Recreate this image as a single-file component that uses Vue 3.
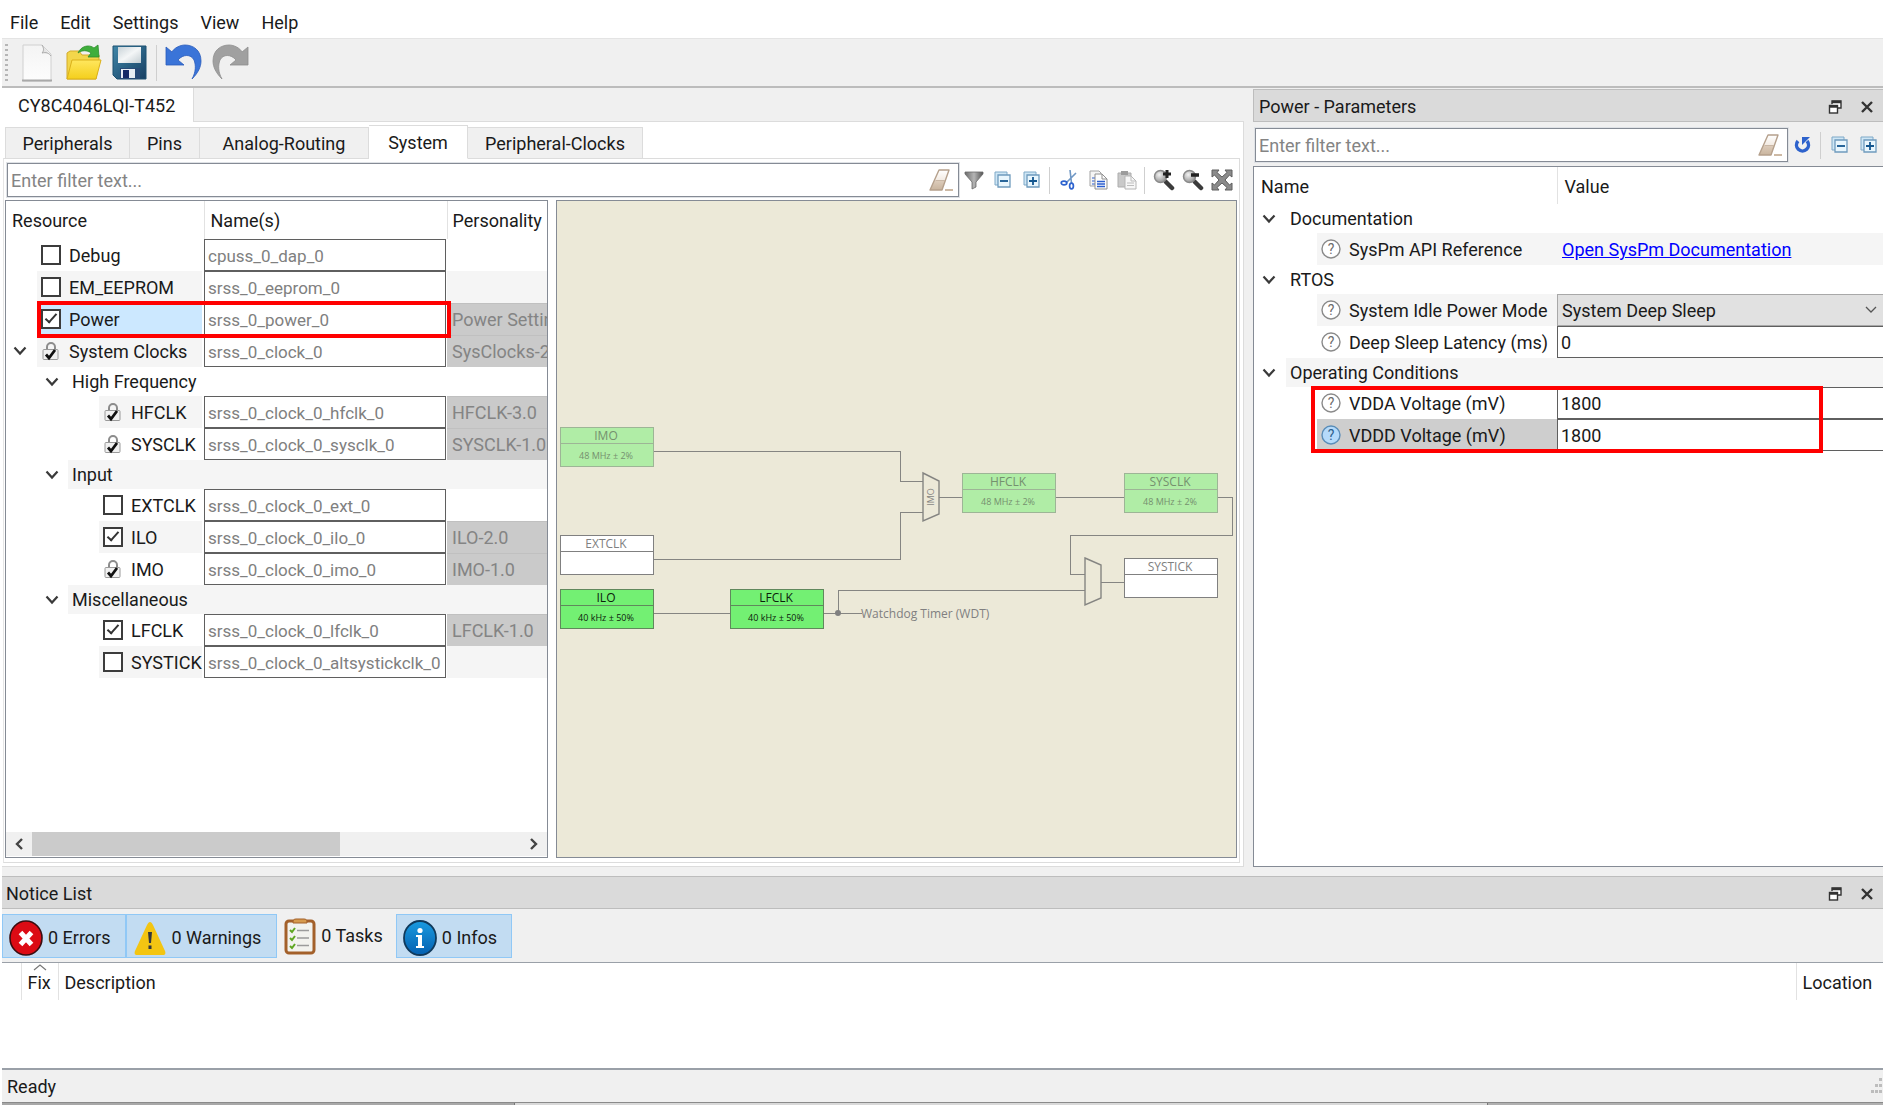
<script setup>
import { ref } from 'vue'

const menus = ['File', 'Edit', 'Settings', 'View', 'Help']

const tabs = [
  { label: 'Peripherals', width: 125 },
  { label: 'Pins', width: 70 },
  { label: 'Analog-Routing', width: 169 },
  { label: 'System', width: 99 },
  { label: 'Peripheral-Clocks', width: 175 }
]
const activeTab = ref('System')

const resources = ref([
  { id: 'debug', label: 'Debug', level: 1, kind: 'check', on: false, name: 'cpuss_0_dap_0' },
  { id: 'eeprom', label: 'EM_EEPROM', level: 1, kind: 'check', on: false, name: 'srss_0_eeprom_0' },
  { id: 'power', label: 'Power', level: 1, kind: 'check', on: true, name: 'srss_0_power_0', personality: 'Power Settings-1.0', selected: true },
  { id: 'clocks', label: 'System Clocks', level: 1, kind: 'lock', open: true, name: 'srss_0_clock_0', personality: 'SysClocks-2.0' },
  { id: 'hf', label: 'High Frequency', kind: 'section' },
  { id: 'hfclk', label: 'HFCLK', level: 2, kind: 'lock', name: 'srss_0_clock_0_hfclk_0', personality: 'HFCLK-3.0' },
  { id: 'sysclk', label: 'SYSCLK', level: 2, kind: 'lock', name: 'srss_0_clock_0_sysclk_0', personality: 'SYSCLK-1.0' },
  { id: 'input', label: 'Input', kind: 'section' },
  { id: 'extclk', label: 'EXTCLK', level: 2, kind: 'check', on: false, name: 'srss_0_clock_0_ext_0' },
  { id: 'ilo', label: 'ILO', level: 2, kind: 'check', on: true, name: 'srss_0_clock_0_ilo_0', personality: 'ILO-2.0' },
  { id: 'imo', label: 'IMO', level: 2, kind: 'lock', name: 'srss_0_clock_0_imo_0', personality: 'IMO-1.0' },
  { id: 'misc', label: 'Miscellaneous', kind: 'section' },
  { id: 'lfclk', label: 'LFCLK', level: 2, kind: 'check', on: true, name: 'srss_0_clock_0_lfclk_0', personality: 'LFCLK-1.0' },
  { id: 'systick', label: 'SYSTICK', level: 2, kind: 'check', on: false, name: 'srss_0_clock_0_altsystickclk_0' }
])

const nodes = [
  { name: 'IMO', rate: '48 MHz ± 2%', x: 3, y: 225, state: 'fixed' },
  { name: 'EXTCLK', rate: '', x: 3, y: 333, state: 'off' },
  { name: 'ILO', rate: '40 kHz ± 50%', x: 3, y: 387, state: 'on' },
  { name: 'LFCLK', rate: '40 kHz ± 50%', x: 173, y: 387, state: 'on' },
  { name: 'HFCLK', rate: '48 MHz ± 2%', x: 405, y: 271, state: 'fixed' },
  { name: 'SYSCLK', rate: '48 MHz ± 2%', x: 567, y: 271, state: 'fixed' },
  { name: 'SYSTICK', rate: '', x: 567, y: 356, state: 'off' }
]

const wires = [
  'M96 249H343V279H366',
  'M96 357H343V310H366',
  'M382 295H405',
  'M498 295H567',
  'M660 295H675V333H513V372H528',
  'M96 411H173',
  'M266 411H305',
  'M281 411V388H528',
  'M544 380H567'
]

const params = ref([
  { id: 'doc', label: 'Documentation', kind: 'section' },
  { id: 'api', label: 'SysPm API Reference', kind: 'link', value: 'Open SysPm Documentation', shade: true },
  { id: 'rtos', label: 'RTOS', kind: 'section' },
  { id: 'idle', label: 'System Idle Power Mode', kind: 'select', value: 'System Deep Sleep', shade: true },
  { id: 'lat', label: 'Deep Sleep Latency (ms)', kind: 'text', value: '0' },
  { id: 'op', label: 'Operating Conditions', kind: 'section', shade: true },
  { id: 'vdda', label: 'VDDA Voltage (mV)', kind: 'text', value: '1800' },
  { id: 'vddd', label: 'VDDD Voltage (mV)', kind: 'text', value: '1800', current: true }
])

const shaded = (i) => i % 2 === 1
</script>

<template>
  <div class="app">
    <svg class="defs" width="0" height="0" aria-hidden="true">
      <defs>
        <linearGradient id="gPage" x1="0" y1="0" x2="0" y2="1"><stop offset="0" stop-color="#f4f4f4" /><stop offset="1" stop-color="#fdfdfd" /></linearGradient>
        <linearGradient id="gFolder" x1="0" y1="0" x2="0" y2="1"><stop offset="0" stop-color="#ffe75e" /><stop offset="1" stop-color="#f4cf1c" /></linearGradient>
        <linearGradient id="gDisk" x1="0" y1="0" x2="1" y2="1"><stop offset="0" stop-color="#3f86a8" /><stop offset="1" stop-color="#173f63" /></linearGradient>
        <linearGradient id="gLabel" x1="0" y1="0" x2="1" y2="1"><stop offset="0" stop-color="#c9d3d8" /><stop offset="0.5" stop-color="#f4f6f7" /><stop offset="1" stop-color="#c3cdd2" /></linearGradient>
        <linearGradient id="gErase" x1="0" y1="0" x2="0" y2="1"><stop offset="0" stop-color="#ffffff" /><stop offset="0.5" stop-color="#f3ebe3" /><stop offset="0.55" stop-color="#dccbba" /><stop offset="1" stop-color="#c9b49d" /></linearGradient>
        <linearGradient id="gFunnel" x1="0" y1="0" x2="1" y2="0"><stop offset="0" stop-color="#6b6b6b" /><stop offset="0.5" stop-color="#b5b5b5" /><stop offset="1" stop-color="#555" /></linearGradient>
        <linearGradient id="gInfo" x1="0" y1="0" x2="0" y2="1"><stop offset="0" stop-color="#1a9be0" /><stop offset="1" stop-color="#0560b0" /></linearGradient>
        <radialGradient id="gLens" cx="0.4" cy="0.35" r="0.7"><stop offset="0" stop-color="#f2f2f2" /><stop offset="1" stop-color="#8f8f8f" /></radialGradient>
      </defs>
      <symbol id="chev" viewBox="0 0 14 10"><path d="M1.500 1.500l5.500 6 5.500-6" fill="none" stroke="#3a3a3a" stroke-width="2.200" /></symbol>
      <symbol id="eraser" viewBox="0 0 24 24">
        <path d="M10 2h10l-7 20H1z" fill="url(#gErase)" stroke="#b5a08c" stroke-width="1.4" stroke-linejoin="round" />
        <path d="M6.500 12.500h9.500" stroke="#c9b7a5" stroke-width="1" /><path d="M16 22h8" stroke="#cdb9a4" stroke-width="2" />
      </symbol>
      <symbol id="collapse" viewBox="0 0 18 18">
        <path d="M1 1h12v13H1z" fill="#cfe6f5" stroke="#7fa9c8" /><path d="M4 4h12v12H4z" fill="#e9f6fd" stroke="#6f9bbd" stroke-width="1.3" /><path d="M6 10h8" stroke="#13568f" stroke-width="1.800" />
      </symbol>
      <symbol id="expand" viewBox="0 0 18 18">
        <path d="M1 1h12v13H1z" fill="#cfe6f5" stroke="#7fa9c8" /><path d="M4 4h12v12H4z" fill="#e9f6fd" stroke="#6f9bbd" stroke-width="1.3" /><path d="M6 10h8M10 6v8" stroke="#13568f" stroke-width="1.800" />
      </symbol>
      <symbol id="lock" viewBox="0 0 18 20">
        <path d="M5 9V6a4 4 0 0 1 8 0v3" fill="none" stroke="#8c8c8c" stroke-width="2" />
        <rect x="1" y="8.500" width="15" height="10" rx="1" fill="#f1f1f1" stroke="#9a9a9a" />
        <path d="M4 13.500l3 3.500 6-8" fill="none" stroke="#111" stroke-width="2.800" />
      </symbol>
      <symbol id="float" viewBox="0 0 14 14">
        <path d="M4 4V1h9v7h-3" fill="#fff" stroke="#333" stroke-width="1.400" /><path d="M4 2h9" stroke="#333" stroke-width="2.500" />
        <rect x="1.500" y="5.500" width="8" height="7.500" fill="#fff" stroke="#333" stroke-width="1.400" /><path d="M1 6.500h9" stroke="#333" stroke-width="2.500" />
      </symbol>
      <symbol id="close" viewBox="0 0 14 14"><path d="M2 2l10 10M12 2L2 12" stroke="#333" stroke-width="2.400" /></symbol>
    </svg>

    <nav class="menubar">
      <button v-for="m in menus" :key="m" type="button">{{ m }}</button>
    </nav>

    <div class="toolbar">
      <span class="grip"></span>
      <button type="button" aria-label="New">
        <svg width="38" height="38" viewBox="0 0 38 38"><path d="M4 1h19l9 9v27H4z" fill="url(#gPage)" stroke="#d0d0d0" /><path d="M3 36.500h30" stroke="#a9a9a9" stroke-width="2" /><path d="M23 1c2 3 2 6 0 8 4-1 7 0 9 3" fill="#e4e4e4" stroke="#a8a8a8" /></svg>
      </button>
      <button type="button" aria-label="Open">
        <svg width="38" height="38" viewBox="0 0 38 38"><path d="M2 35V9l3-2h9l3 4h17v5L31 35z" fill="#f2d64b" stroke="#d3aa2a" /><path d="M2 35l5-19h29l-5 19z" fill="url(#gFolder)" stroke="#dbb11a" /><path d="M13 9C16 2 24 0 29 4l4-3 1 12H23l3-4c-4-3-9-3-13 0z" fill="#3fae3c" stroke="#2c8e2c" stroke-width="0.800" /></svg>
      </button>
      <button type="button" aria-label="Save">
        <svg width="38" height="38" viewBox="0 0 38 38"><path d="M2 2h33v33H6l-4-4z" fill="url(#gDisk)" stroke="#1c5170" /><path d="M7 3h23v16H7z" fill="url(#gLabel)" /><path d="M9 24h20v11H9z" fill="#274a77" /><path d="M10 25h14v9H10z" fill="#e9eef5" /><path d="M12 26h6v8h-6z" fill="#152a66" /></svg>
      </button>
      <span class="bar-sep"></span>
      <button type="button" aria-label="Undo">
        <svg width="38" height="38" viewBox="0 0 38 38"><path d="M1 3v18h18l-6-5c5-6 13-6 16 0 2 5 2 12-2 19 6-6 9-12 9-18C36 6 28 1 20 1 15 1 9 4 7 8z" fill="#3a74d8" stroke="#2a5cbb" stroke-width="0.800" /></svg>
      </button>
      <button type="button" aria-label="Redo">
        <svg width="38" height="38" viewBox="0 0 38 38"><path d="M37 3v18H19l6-5c-5-6-13-6-16 0-2 5-2 12 2 19-6-6-9-12-9-18C2 6 10 1 18 1c5 0 11 3 13 7z" fill="#a0a0a0" stroke="#8e8e8e" stroke-width="0.800" /></svg>
      </button>
    </div>

    <div class="work">
      <section class="doc">
        <div class="doctabs"><button type="button" class="doctab">CY8C4046LQI-T452</button><span class="doctabs-rest"></span></div>
        <div class="docbody">
          <div class="tabs" role="tablist">
            <button v-for="t in tabs" :key="t.label" type="button" role="tab" :aria-selected="t.label === activeTab" :class="['tab', { active: t.label === activeTab }]" :style="{ width: t.width + 'px' }" @click="activeTab = t.label">{{ t.label }}</button>
          </div>
          <div class="pane">
            <div class="filterrow">
              <div class="filter">
                <input type="text" placeholder="Enter filter text..." aria-label="Filter resources" />
                <button type="button" aria-label="Clear filter"><svg width="24" height="24"><use href="#eraser" /></svg></button>
              </div>
              <div class="tools">
                <button type="button" aria-label="Filter"><svg width="20" height="20" viewBox="0 0 20 20"><path d="M1 2h18v2l-7 8v5l-4 2v-7L1 4z" fill="url(#gFunnel)" stroke="#6a6a6a" stroke-width="0.800" /></svg></button>
                <button type="button" aria-label="Collapse all"><svg width="18" height="18"><use href="#collapse" /></svg></button>
                <button type="button" aria-label="Expand all"><svg width="18" height="18"><use href="#expand" /></svg></button>
                <span class="bar-sep"></span>
                <button type="button" aria-label="Cut"><svg width="20" height="20" viewBox="0 0 20 20"><path d="M11 0l1.500 13M17 3L7 13" stroke="#6f97c4" stroke-width="1.600" fill="none" /><ellipse cx="5" cy="13" rx="2.800" ry="1.800" fill="none" stroke="#2c62cf" stroke-width="1.700" /><ellipse cx="12.500" cy="16" rx="1.900" ry="2.800" fill="none" stroke="#2c62cf" stroke-width="1.700" /></svg></button>
                <button type="button" aria-label="Copy"><svg width="20" height="20" viewBox="0 0 20 20"><path d="M2 1h9l2 2v13H2z" fill="#f5f5f5" stroke="#a3a3a3" /><path d="M4 8h3M4 11h3M4 14h3" stroke="#2c5fd0" /><path d="M7 4h7l5 5v10H7z" fill="#fdfdfd" stroke="#909090" /><path d="M14 4v5h5" fill="none" stroke="#909090" /><path d="M9 11.500h8M9 14h8M9 16.500h8" stroke="#2c5fd0" stroke-width="1.400" /></svg></button>
                <button type="button" aria-label="Paste"><svg width="20" height="20" viewBox="0 0 20 20"><path d="M1 3h13v14H1z" fill="#c9c9c9" stroke="#adadad" /><path d="M4 1h7v4H4z" fill="#9c9c9c" /><path d="M8 6h6l5 5v8H8z" fill="#f7f7f7" stroke="#b5b5b5" /><path d="M14 6v5h5M10 13h7M10 15.500h7" fill="none" stroke="#bdbdbd" /></svg></button>
                <span class="bar-sep"></span>
                <button type="button" aria-label="Zoom in"><svg width="22" height="22" viewBox="0 0 22 22"><path d="M13 13l6 6" stroke="#3b3b3b" stroke-width="4.500" stroke-linecap="round" /><circle cx="7.500" cy="7.500" r="6" fill="url(#gLens)" stroke="#8a8a8a" stroke-width="1.500" /><path d="M14 1v8M10 5h8" stroke="#222" stroke-width="3" /></svg></button>
                <button type="button" aria-label="Zoom out"><svg width="22" height="22" viewBox="0 0 22 22"><path d="M13 13l6 6" stroke="#3b3b3b" stroke-width="4.500" stroke-linecap="round" /><circle cx="7.500" cy="7.500" r="6" fill="url(#gLens)" stroke="#8a8a8a" stroke-width="1.500" /><path d="M9 6h8" stroke="#222" stroke-width="3.500" /></svg></button>
                <button type="button" aria-label="Fit to view"><svg width="22" height="22" viewBox="0 0 22 22"><path d="M1 1h7L6 3.500l5 4.500 5-4.500L14 1h7v7l-2.500-2L14 11l4.500 5 2.500-2v7h-7l2-2.500-5-4.500-5 4.500L8 21H1v-7l2.500 2L8 11 3.500 6 1 8z" fill="#8b8b8b" stroke="#5e5e5e" /></svg></button>
              </div>
            </div>

            <div class="split">
              <div class="tree">
                <div class="treeview">
                  <table>
                    <colgroup><col class="c-res" /><col class="c-name" /><col class="c-pers" /></colgroup>
                    <thead><tr><th>Resource</th><th>Name(s)</th><th>Personality</th></tr></thead>
                    <tbody>
                      <template v-for="(r, i) in resources" :key="r.id">
                        <tr v-if="r.kind === 'section'" class="section">
                          <td colspan="3">
                            <div class="cell">
                              <button type="button" class="twist lvl-section" :aria-label="'Toggle ' + r.label"><svg width="14" height="10"><use href="#chev" /></svg></button>
                              <span :class="['sectitle', { shade: shaded(i) }]">{{ r.label }}</span>
                            </div>
                          </td>
                        </tr>
                        <tr v-else>
                          <td>
                            <div class="cell">
                              <span :class="['indent', 'lvl' + r.level]"><button v-if="r.open" type="button" class="twist" :aria-label="'Toggle ' + r.label"><svg width="14" height="10"><use href="#chev" /></svg></button></span>
                              <label :class="['res', { shade: shaded(i), selected: r.selected }]">
                                <input v-if="r.kind === 'check'" v-model="r.on" type="checkbox" />
                                <svg v-else class="lock" width="18" height="20"><use href="#lock" /></svg>
                                <span>{{ r.label }}</span>
                              </label>
                            </div>
                            <span v-if="r.selected" class="mark mark-power"></span>
                          </td>
                          <td><input class="field" type="text" :value="r.name" :aria-label="r.label + ' name'" readonly /></td>
                          <td><div :class="['pers', { filled: r.personality, shade: shaded(i) }]">{{ r.personality }}</div></td>
                        </tr>
                      </template>
                    </tbody>
                  </table>
                </div>
                <div class="hscroll">
                  <button type="button" aria-label="Scroll left"><svg width="10" height="14" viewBox="0 0 10 14"><path d="M8 2L3 7l5 5" fill="none" stroke="#444" stroke-width="2.400" /></svg></button>
                  <div class="track"><div class="thumb"></div></div>
                  <button type="button" aria-label="Scroll right"><svg width="10" height="14" viewBox="0 0 10 14"><path d="M2 2l5 5-5 5" fill="none" stroke="#444" stroke-width="2.400" /></svg></button>
                </div>
              </div>

              <div class="canvas">
                <svg width="680" height="640" viewBox="0 -1 680 640" role="img" aria-label="Clock diagram">
                  <g shape-rendering="crispEdges"><path v-for="w in wires" :key="w" :d="w" class="wire" /></g>
                  <path class="mux" d="M366 271L382 279V312L366 319Z" />
                  <path class="mux" d="M528 356L544 363V396L528 403Z" />
                  <circle cx="281" cy="411" r="3" fill="#808080" />
                  <text class="muxtext" transform="translate(377 295) rotate(-90)">IMO</text>
                  <text class="wdt" x="304" y="416">Watchdog Timer (WDT)</text>
                  <g v-for="n in nodes" :key="n.name" :class="['node', n.state]" :transform="`translate(${n.x} ${n.y})`">
                    <rect width="93" height="39" shape-rendering="crispEdges" />
                    <path d="M0 16H93" shape-rendering="crispEdges" />
                    <text class="nname" x="46" y="13">{{ n.name }}</text>
                    <text class="nrate" x="46" y="32">{{ n.rate }}</text>
                  </g>
                </svg>
              </div>
            </div>
          </div>
        </div>
      </section>

      <aside class="params">
        <header class="docktitle">
          <h2>Power - Parameters</h2>
          <button type="button" aria-label="Float parameters"><svg width="14" height="14"><use href="#float" /></svg></button>
          <button type="button" aria-label="Close parameters"><svg width="14" height="14"><use href="#close" /></svg></button>
        </header>
        <div class="filterrow pfilter">
          <div class="filter">
            <input type="text" placeholder="Enter filter text..." aria-label="Filter parameters" />
            <button type="button" aria-label="Clear filter"><svg width="24" height="24"><use href="#eraser" /></svg></button>
          </div>
          <div class="tools">
            <button type="button" aria-label="Reset"><svg width="18" height="18" viewBox="0 0 18 18"><path d="M4 5a6 6 0 1 0 9 0" fill="none" stroke="#2d62cc" stroke-width="3.500" /><path d="M8 9V1h8z" fill="#2d62cc" /></svg></button>
            <span class="bar-sep"></span>
            <button type="button" aria-label="Collapse all"><svg width="18" height="18"><use href="#collapse" /></svg></button>
            <button type="button" aria-label="Expand all"><svg width="18" height="18"><use href="#expand" /></svg></button>
          </div>
        </div>
        <div class="ptable">
          <table>
            <colgroup><col class="p-name" /><col /></colgroup>
            <thead><tr><th>Name</th><th>Value</th></tr></thead>
            <tbody>
              <template v-for="p in params" :key="p.id">
                <tr v-if="p.kind === 'section'" class="section">
                  <td colspan="2">
                    <div class="cell">
                      <button type="button" class="twist lvl-param" :aria-label="'Toggle ' + p.label"><svg width="14" height="10"><use href="#chev" /></svg></button>
                      <span :class="['sectitle', 'psec', { shade: p.shade }]">{{ p.label }}</span>
                    </div>
                  </td>
                </tr>
                <tr v-else>
                  <td>
                    <div class="cell">
                      <span class="indent lvlp"></span>
                      <div :class="['pname', { shade: p.shade, current: p.current }]">
                        <svg width="22" height="22" viewBox="0 0 22 22" aria-hidden="true"><circle cx="11" cy="11" r="9" :class="['q', { 'q-on': p.current }]" /><text x="11" y="16" :class="['qt', { 'qt-on': p.current }]">?</text></svg>
                        <label :for="'p-' + p.id">{{ p.label }}</label>
                      </div>
                    </div>
                    <span v-if="p.id === 'vdda'" class="mark mark-volt"></span>
                  </td>
                  <td>
                    <div v-if="p.kind === 'link'" class="linkcell shade"><a :id="'p-' + p.id" href="#">{{ p.value }}</a></div>
                    <div v-else-if="p.kind === 'select'" class="selectbox">
                      <select :id="'p-' + p.id" v-model="p.value"><option>System Deep Sleep</option><option>CPU Sleep</option><option>Active</option></select>
                      <svg width="14" height="10" viewBox="0 0 14 10"><path d="M2 2l5 5 5-5" fill="none" stroke="#555" stroke-width="1.300" /></svg>
                    </div>
                    <input v-else :id="'p-' + p.id" v-model="p.value" class="field value" type="text" />
                  </td>
                </tr>
              </template>
            </tbody>
          </table>
        </div>
      </aside>
    </div>

    <section class="notices">
      <header class="docktitle">
        <h2>Notice List</h2>
        <button type="button" aria-label="Float notice list"><svg width="14" height="14"><use href="#float" /></svg></button>
        <button type="button" aria-label="Close notice list"><svg width="14" height="14"><use href="#close" /></svg></button>
      </header>
      <div class="nbar">
        <button type="button" class="nbtn on">
          <svg width="34" height="36" viewBox="0 0 34 36"><ellipse cx="17" cy="18" rx="16" ry="17" fill="#dc0b14" stroke="#3a0d10" stroke-width="1.600" /><path d="M11.500 12.500l11 12M22.500 12.500l-11 12" stroke="#fff" stroke-width="5" /></svg>
          0 Errors
        </button>
        <button type="button" class="nbtn on warn">
          <svg width="34" height="36" viewBox="0 0 34 36"><path d="M17 2c1 0 2 1 3 3l12 26c1 3 0 4-2 4H4c-2 0-3-1-2-4L14 5c1-2 2-3 3-3z" fill="#f3c512" /><path d="M15 12h4l-1 11h-2zM15.500 25.500h3V29h-3z" fill="#33373d" /></svg>
          0 Warnings
        </button>
        <button type="button" class="nbtn tasks">
          <svg width="32" height="38" viewBox="0 0 32 38"><rect x="2" y="4" width="28" height="32" rx="3" fill="#f2f2ee" stroke="#a3602a" stroke-width="3" /><path d="M9 5c0-2 1-3 3-3h8c2 0 3 1 3 3v1H9z" fill="#d69a4d" stroke="#a3602a" /><path d="M13 13.500h12M13 21h12M13 28.500h12" stroke="#9b9b9b" stroke-width="1.600" /><path d="M6 13l2 2 3-4M6 21l2 2 3-4M6 29l2 2 3-4" fill="none" stroke="#5ea621" stroke-width="2" /></svg>
          0 Tasks
        </button>
        <button type="button" class="nbtn on">
          <svg width="34" height="36" viewBox="0 0 34 36"><ellipse cx="17" cy="18" rx="16" ry="17" fill="url(#gInfo)" stroke="#103a5c" stroke-width="1.800" /><circle cx="17" cy="10.500" r="2.600" fill="#fff" /><path d="M13 15h6v11h2v2h-8v-2h2v-9h-2z" fill="#fff" /></svg>
          0 Infos
        </button>
      </div>
      <div class="ntable">
        <table>
          <colgroup><col class="n-0" /><col class="n-fix" /><col /><col class="n-loc" /></colgroup>
          <thead>
            <tr>
              <th aria-label="Severity"></th>
              <th class="sorted"><svg width="14" height="8" viewBox="0 0 14 8"><path d="M1 7l6-5 6 5" fill="none" stroke="#777" stroke-width="1.200" /></svg>Fix</th>
              <th>Description</th>
              <th>Location</th>
            </tr>
          </thead>
        </table>
      </div>
    </section>

    <footer class="status">
      <span>Ready</span>
      <svg width="13" height="18" viewBox="0 0 13 18"><path d="M9 0h3v3H9zM5 6h3v3H5zM9 6h3v3H9zM1 12h3v3H1zM5 12h3v3H5zM9 12h3v3H9z" fill="#bdbdbd" /></svg>
    </footer>
    <div class="edge"><span class="edge-a"></span><span class="edge-b"></span><span class="edge-c"></span></div>
  </div>
</template>

<style>
body { margin: 0; background: #fff; }
</style>

<style scoped>
.app {
  display: flex;
  flex-direction: column;
  min-height: 100vh;
  box-sizing: border-box;
  padding: 0 1px 0 2px;
  font: 18px/24px Roboto, "Open Sans", sans-serif;
  color: #1a1a1a;
  background: #fff;
}
.app *, .app *::before { box-sizing: border-box; }
.defs { position: absolute; }
button, input, select { font: inherit; color: inherit; margin: 0; }
button { background: none; border: 0; padding: 0; display: flex; align-items: center; justify-content: center; }
svg { display: block; flex: none; }
h2 { font: inherit; margin: 0; flex: 1; }
table { border-collapse: collapse; table-layout: fixed; width: 100%; }
th { font-weight: inherit; text-align: left; padding: 0; }
td { padding: 0; position: relative; }

.menubar { display: flex; gap: 2px; height: 38px; padding-top: 8px; }
.menubar button { padding: 0 10px; height: 30px; }
.menubar button:first-child { padding-left: 8px; }

.toolbar { display: flex; align-items: center; height: 50px; background: #f0f0f0; border-top: 1px solid #e4e4e4; border-bottom: 2px solid #bcbcbc; }
.toolbar button { width: 46px; height: 40px; }
.grip { width: 3px; height: 38px; margin: 0 7px 0 3px; background: repeating-linear-gradient(#b5b5b5 0 2px, #f0f0f0 2px 5px); }
.bar-sep { flex: none; width: 1px; height: 36px; background: #cfcfcf; margin: 0 4px 0 3px; }

.work { flex: 1; display: flex; gap: 9px; background: #f0f0f0; padding-bottom: 9px; }
.doc { flex: 1242 1 0; min-width: 0; display: flex; flex-direction: column; }
.doctabs { display: flex; height: 34px; }
.doctab { background: #fff; padding: 2px 18px 0 16px; border-right: 1px solid #dcdcdc; }
.doctabs-rest { flex: 1; border-bottom: 1px solid #dcdcdc; }
.docbody { flex: 1; display: flex; flex-direction: column; background: #fff; border-right: 1px solid #dcdcdc; border-bottom: 1px solid #dcdcdc; padding: 3px 3px 3px 1px; }
.tabs { display: flex; align-items: flex-end; height: 34px; padding-left: 2px; }
.tab { height: 32px; padding-top: 2px; background: #f0f0f0; border: 1px solid #dcdcdc; border-left-width: 0; }
.tab:first-child { border-left-width: 1px; }
.tab.active { height: 34px; position: relative; z-index: 1; background: #fff; border-bottom-color: #fff; }
.pane { flex: 1; display: flex; flex-direction: column; border: 1px solid #dcdcdc; border-left-color: #e6e6e6; margin-top: -1px; padding: 4px 2px 4px 1px; }

.filterrow { display: flex; align-items: center; }
.filter { flex: 1; display: flex; height: 34px; margin-left: 2px; border: 1px solid #858b95; outline: 1px solid #dfe2e6; background: #fff; padding-right: 5px; }
.filter input { flex: 1; min-width: 0; border: 0; outline: 0; background: none; padding: 2px 3px 0; }
.filter input::placeholder { color: #848484; opacity: 1; }
.tools { display: flex; align-items: center; width: 278px; }
.tools button { width: 29px; height: 29px; }
.tools .bar-sep { height: 27px; }

.split { flex: 1; display: flex; gap: 8px; margin-top: 3px; }
.tree { flex: 543 1 0; min-width: 0; display: flex; flex-direction: column; border: 1px solid #858b95; background: #fff; }
.treeview { flex: 1; overflow: hidden; }
.c-res { width: 198px; }
.c-name { width: 243px; }
.tree th { height: 38px; padding: 2px 0 0 6px; border-right: 1px solid #e2e2e2; }
.tree th:last-child { border-right: 0; padding-left: 5px; }
.tree tbody tr { height: 32px; }
.app tbody tr.section { height: 29px; }
.cell { display: flex; height: 32px; }
.section .cell { height: 29px; }
.indent { flex: none; display: flex; align-items: center; }
.lvl1 { width: 31px; padding-left: 7px; }
.lvl2 { width: 93px; }
.lvlp { width: 63px; }
.twist { flex: none; }
.lvl-section { width: 62px; padding-left: 30px; }
.sectitle { flex: 1; display: flex; align-items: center; padding-left: 4px; }
.shade { background: #f5f5f5; }
.res { flex: 1; display: flex; align-items: center; gap: 8px; padding-left: 4px; margin-right: 2px; white-space: nowrap; }
.res span, .pname label { padding-top: 2px; }
.res.selected { background: #cce8ff; }
.res input { appearance: none; width: 20px; height: 20px; flex: none; border: 2px solid #3c3c3c; background: #fff; position: relative; }
.res input:checked::before { content: ""; position: absolute; left: 5px; top: 0; width: 6px; height: 12px; border: solid #333; border-width: 0 2px 2px 0; transform: rotate(42deg); }
.lock { margin: 0 1px; }
.field { display: block; width: 100%; height: 32px; border: 1px solid #5f5f5f; background: #fff; padding: 0 3px; border-radius: 0; outline: 0; }
.tree .field { color: #808080; width: 242px; font-size: 17px; padding-top: 2px; }
.pers { height: 32px; line-height: 32px; padding-left: 5px; white-space: nowrap; overflow: hidden; color: #848484; }
.pers.filled { background: #cacaca; border-top: 1px solid #c0c0c0; }
.mark { position: absolute; z-index: 2; border: 4px solid #f00; pointer-events: none; }
.mark-power { left: 31px; top: -2px; width: 414px; height: 37px; }

.hscroll { display: flex; height: 24px; background: #f0f0f0; margin-bottom: 1px; }
.hscroll button { width: 26px; }
.track { flex: 1; }
.thumb { width: 63%; height: 100%; background: #cbcbcb; }

.canvas { flex: 681 1 0; min-width: 0; overflow: hidden; border: 1px solid #858b95; background: #ece9d8; }
.wire { fill: none; stroke: #858582; stroke-width: 1; }
.mux { fill: none; stroke: #858582; stroke-width: 1.400; }
.node text { text-anchor: middle; fill: #808080; }
.node rect, .node path { stroke: #808080; fill: #fff; }
.nname, .wdt { font: 12px "Open Sans", sans-serif; }
.nrate, .muxtext { font: 9px "Open Sans", sans-serif; }
.muxtext { text-anchor: middle; fill: #858582; }
.wdt { fill: #808080; }
.node.fixed rect, .node.fixed path { fill: #b0eda6; stroke: #9db596; }
.node.fixed text { fill: #75906e; }
.node.on rect, .node.on path { fill: #73f073; stroke: #60885c; }
.node.on text { fill: #0c200c; }

.params { flex: 630 1 0; min-width: 0; display: flex; flex-direction: column; padding-top: 1px; }
.docktitle { display: flex; align-items: center; height: 33px; background: #dadada; border: 1px solid #bdbdbd; border-right: 0; padding: 2px 0 0 5px; }
.docktitle button { width: 32px; height: 28px; }
.pfilter { height: 44px; padding-top: 2px; }
.pfilter .tools { width: 95px; }
.ptable { flex: 1; background: #fff; border: 1px solid #858b95; border-right: 0; overflow: hidden; }
.p-name { width: 303px; }
.ptable th { height: 37px; padding: 2px 0 0 7px; }
.ptable th:first-child { border-right: 1px solid #e2e2e2; }
.lvl-param { width: 32px; padding-right: 2px; }
.psec { padding-left: 4px; }
.pname { flex: 1; display: flex; align-items: center; gap: 7px; padding-left: 3px; white-space: nowrap; }
.pname.current { background: #cecece; }
.q { fill: #fff; stroke: #8a8a8a; stroke-width: 1.400; }
.q-on { fill: #b5dafa; stroke: #5a8db8; }
.qt { font: 14px Roboto, sans-serif; text-anchor: middle; fill: #6c6c6c; }
.qt-on { fill: #2d5f8c; }
.linkcell { height: 32px; line-height: 34px; padding-left: 5px; }
.linkcell a { color: #00f; text-decoration: underline; }
.selectbox { display: flex; align-items: center; height: 32px; background: #e1e1e1; border: 1px solid #a8a8a8; border-right: 0; padding-right: 5px; }
.selectbox select { flex: 1; appearance: none; border: 0; background: none; padding: 2px 4px 0; height: 30px; outline: 0; }
.field.value { border-right: 0; }
.mark-volt { left: 57px; top: -1px; width: 512px; height: 67px; }

.notices .docktitle { border-left: 0; padding-left: 4px; }
.nbar { display: flex; align-items: flex-start; height: 53px; background: #f0f0f0; padding-top: 5px; }
.nbtn { height: 44px; gap: 5px; padding: 3px 14px 0 6px; border: 1px solid transparent; }
.nbtn.on { background: #c2dcf2; border-color: #90c8f6; }
.nbtn.warn { padding-right: 15px; }
.nbtn.tasks { padding: 0 12px 0 6px; }
.ntable { border: 1px solid #9aa0a8; border-width: 1px 0 2px; min-height: 108px; }
.n-0 { width: 19px; }
.n-fix { width: 37px; }
.n-loc { width: 87px; }
.ntable th { height: 37px; padding: 2px 0 0 6px; border-right: 1px solid #e2e2e2; position: relative; }
.ntable th:last-child { border-right: 0; }
.sorted svg { position: absolute; left: 11px; top: 0; }
.status { display: flex; justify-content: space-between; align-items: center; height: 32px; background: #f0f0f0; padding: 2px 0 0 5px; }
.edge { display: flex; height: 3px; border-top: 1px solid #8a8a8a; }
.edge-a { flex: 513; background: #a8a8a8; border-right: 1px solid #777; }
.edge-b { flex: 975; background: #d9d9d9; }
.edge-c { flex: 396; background: #b0b0b0; border-left: 1px solid #777; }
</style>
